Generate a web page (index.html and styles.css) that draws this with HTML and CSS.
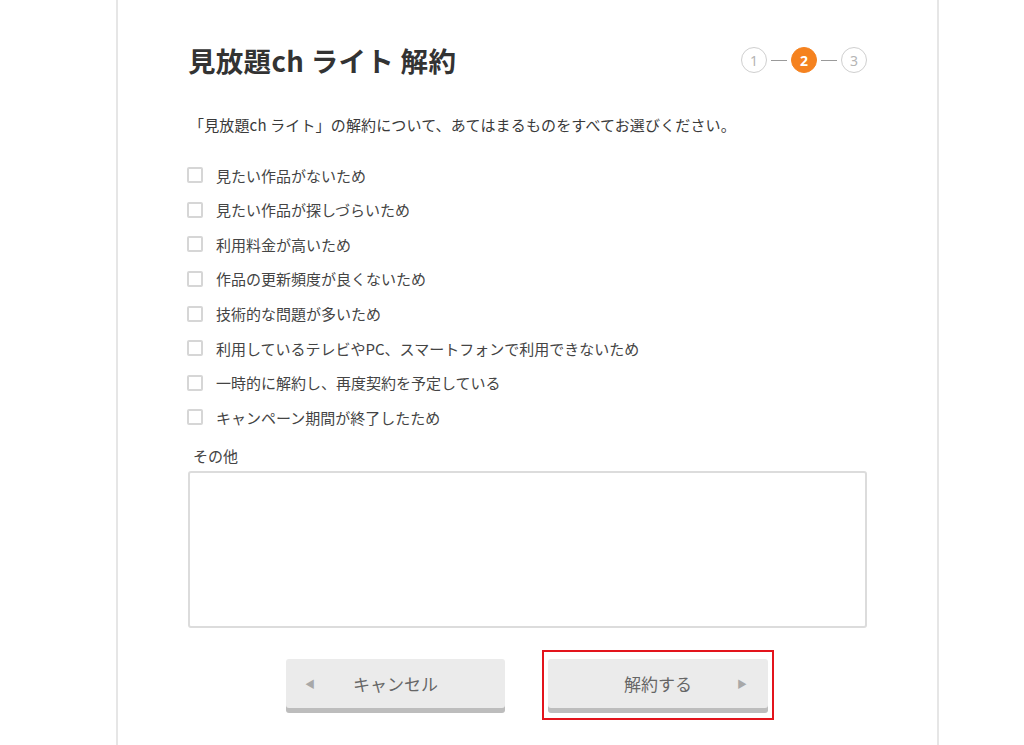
FILE: index.html
```html
<!DOCTYPE html>
<html lang="ja">
<head>
<meta charset="utf-8">
<title>見放題ch ライト 解約</title>
<link rel="stylesheet" href="styles.css">
</head>
<body>
<div class="page">
  <div class="panel">
    <div class="header">
      <h1 class="title">見放題ch ライト 解約</h1>
      <div class="steps">
        <span class="step">1</span>
        <span class="step-line"></span>
        <span class="step step-active">2</span>
        <span class="step-line"></span>
        <span class="step">3</span>
      </div>
    </div>
    <p class="lead">「見放題ch ライト」の解約について、あてはまるものをすべてお選びください。</p>
    <ul class="reasons">
      <li class="reason"><span class="box"></span>見たい作品がないため</li>
      <li class="reason"><span class="box"></span>見たい作品が探しづらいため</li>
      <li class="reason"><span class="box"></span>利用料金が高いため</li>
      <li class="reason"><span class="box"></span>作品の更新頻度が良くないため</li>
      <li class="reason"><span class="box"></span>技術的な問題が多いため</li>
      <li class="reason"><span class="box"></span>利用しているテレビやPC、スマートフォンで利用できないため</li>
      <li class="reason"><span class="box"></span>一時的に解約し、再度契約を予定している</li>
      <li class="reason"><span class="box"></span>キャンペーン期間が終了したため</li>
    </ul>
    <div class="other-label">その他</div>
    <div class="other-box"></div>
    <div class="actions">
      <div class="btn btn-cancel"><span class="arrow arrow-left">◀</span>キャンセル</div>
      <div class="highlight">
        <div class="btn btn-submit">解約する<span class="arrow arrow-right">▶</span></div>
      </div>
    </div>
  </div>
</div>
</body>
</html>
```

FILE: styles.css
```css
* { box-sizing: border-box; }
html, body {
  margin: 0;
  padding: 0;
  background: #fff;
  font-family: "Noto Sans CJK JP", "Noto Sans", sans-serif;
  color: #3a3a3a;
}
.page {
  height: 745px;
  overflow: hidden;
}
.panel {
  margin-left: 116px;
  width: 823px;
  min-height: 745px;
  border-left: 2px solid #e6e6e6;
  border-right: 2px solid #e6e6e6;
  padding: 42px 70px 0 71px;
}
.header {
  display: flex;
  align-items: center;
  justify-content: space-between;
  height: 36px;
}
.title {
  margin: 0 0 0 -1px;
  font-size: 27.5px;
  font-weight: bold;
  line-height: 36px;
  color: #333;
  letter-spacing: 0.3px;
}
.steps {
  display: flex;
  align-items: center;
  gap: 4px;
}
.step {
  width: 26px;
  height: 26px;
  border-radius: 50%;
  border: 1.5px solid #cfcfcf;
  color: #b5b5b5;
  font-size: 14px;
  display: flex;
  align-items: center;
  justify-content: center;
  font-family: "Noto Sans", sans-serif;
}
.step-active {
  background: #f5821f;
  border-color: #f5821f;
  color: #fff;
  font-weight: bold;
}
.step-line {
  width: 16px;
  height: 1px;
  background: #9a9a9a;
}
.lead {
  margin: 37px 0 0;
  font-size: 15px;
  line-height: 20px;
  color: #3a3a3a;
  letter-spacing: 0.15px;
}
.reasons {
  list-style: none;
  margin: 23px 0 0;
  padding: 0;
}
.reason {
  height: 34.57px;
  display: flex;
  align-items: center;
  font-size: 15px;
  color: #444;
}
.box {
  width: 16px;
  height: 16px;
  border: 2px solid #d6d6d6;
  border-radius: 2px;
  margin-left: -2px;
  margin-right: 13px;
  flex-shrink: 0;
}
.other-label {
  margin-top: 11px;
  padding-left: 4px;
  font-size: 15px;
  line-height: 20px;
  color: #444;
}
.other-box {
  margin-top: 5px;
  height: 157px;
  border: 2px solid #dcdcdc;
  border-radius: 3px;
  margin-left: -1px;
}
.actions {
  margin-top: 31px;
  display: flex;
  justify-content: center;
  gap: 43px;
  padding-right: 2px;
}
.btn {
  position: relative;
  width: 219px;
  height: 49px;
  background: #ebebeb;
  border-radius: 3px;
  box-shadow: 0 5px 0 #bdbdbd;
  display: flex;
  align-items: center;
  justify-content: center;
  font-size: 17px;
  color: #666;
}
.btn-submit { width: 220px; }
.arrow {
  position: absolute;
  top: 50%;
  transform: translateY(-50%);
  font-size: 10px;
  color: #a8a8a8;
}
.arrow-left { left: 19px; }
.arrow-right { right: 21px; }
.highlight {
  position: relative;
}
.highlight::after {
  content: "";
  position: absolute;
  left: -6px;
  right: -6px;
  top: -9px;
  bottom: -12px;
  border: 2px solid #e3141c;
  pointer-events: none;
}
```
